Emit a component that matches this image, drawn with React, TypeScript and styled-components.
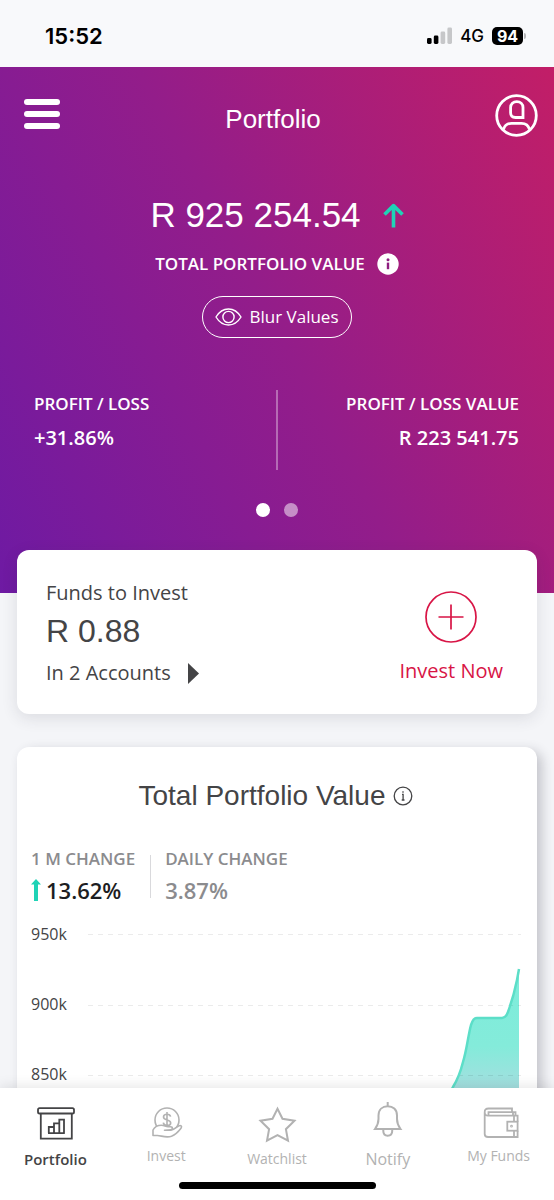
import React from "react";
import styled, { createGlobalStyle } from "styled-components";

const sans = `"Open Sans", "Noto Sans", sans-serif`;
const display = `"Liberation Sans", Arial, sans-serif`;
const system = `Inter, "Liberation Sans", sans-serif`;

const color = {
  page: "#f4f5f8",
  status: "#f8f9fb",
  ink: "#444446",
  muted: "#8b8b8e",
  idle: "#b2b2b2",
  accent: "#d81546",
  teal: "#1fd3b6",
};

const GlobalStyle = createGlobalStyle`
  *, *::before, *::after { box-sizing: border-box; }
  body { margin: 0; background: ${color.page}; font-family: ${sans}; color: ${color.ink}; }
  button { font: inherit; color: inherit; background: none; border: 0; padding: 0; cursor: pointer; }
  h1, h2, p, dl, dt, dd, ul { margin: 0; padding: 0; }
  svg { display: block; flex: none; }
`;

const Shell = styled.div`
  display: flex;
  flex-direction: column;
  height: 100vh;
  overflow: hidden;
`;

const StatusBar = styled.div`
  flex: none;
  display: flex;
  align-items: center;
  justify-content: space-between;
  height: 67px;
  padding: 4px 28px 0 45px;
  background: ${color.status};
  color: #000;
  font-family: ${system};
`;

const Clock = styled.time`
  font-size: 22px;
  font-weight: 600;
  line-height: 28px;
`;

const StatusIcons = styled.div`
  display: flex;
  align-items: center;
  gap: 8px;
`;

const Network = styled.span`
  font-size: 17px;
  font-weight: 500;
  line-height: 20px;
`;

const Battery = styled.span`
  display: flex;
  align-items: center;
  gap: 1px;
  &::after {
    content: "";
    width: 2px;
    height: 6px;
    border-radius: 0 2px 2px 0;
    background: #b5b6b8;
  }
`;

const Charge = styled.span`
  width: 31px;
  border-radius: 5px;
  background: #000;
  color: #fff;
  font-size: 16px;
  font-weight: 700;
  line-height: 18px;
  text-align: center;
`;

const Content = styled.main`
  flex: 1;
  min-height: 0;
  overflow-y: auto;
  scrollbar-width: none;
`;

const Hero = styled.section`
  display: flex;
  flex-direction: column;
  align-items: center;
  padding: 27px 0 76px;
  color: #fff;
  background: linear-gradient(62deg, #6e1aa3 0%, #931d8a 50%, #c21e67 100%);
`;

const TopBar = styled.header`
  align-self: stretch;
  display: grid;
  grid-template-columns: 1fr auto 1fr;
  align-items: center;
  padding: 0 16px 0 8px;
`;

const MenuButton = styled.button`
  justify-self: start;
  display: flex;
  flex-direction: column;
  gap: 6px;
  padding: 0 16px 4px;
`;

const MenuLine = styled.span`
  width: 36px;
  height: 6px;
  border-radius: 3px;
  background: #fff;
`;

const PageTitle = styled.h1`
  padding-top: 6px;
  font-family: ${display};
  font-size: 26px;
  font-weight: 400;
  line-height: 32px;
`;

const ProfileButton = styled.button`
  justify-self: end;
`;

const TotalRow = styled.div`
  display: flex;
  align-items: center;
  gap: 22px;
  margin-top: 56px;
`;

const TotalAmount = styled.p`
  font-family: ${display};
  font-size: 35px;
  line-height: 44px;
`;

const CaptionRow = styled.div`
  display: flex;
  align-items: center;
  gap: 12px;
  margin-top: 15px;
`;

const Caption = styled.p`
  font-size: 17px;
  font-weight: 600;
  line-height: 24px;
`;

const BlurButton = styled.button`
  display: flex;
  align-items: center;
  gap: 7px;
  height: 42px;
  margin-top: 20px;
  padding: 0 12px;
  border: 1px solid #fff;
  border-radius: 21px;
  font-size: 17px;
  line-height: 24px;
`;

const ProfitRow = styled.dl`
  align-self: stretch;
  display: flex;
  justify-content: space-between;
  height: 80px;
  margin-top: 52px;
  padding: 0 35px 0 34px;
`;

const Profit = styled.div<{ $end?: boolean }>`
  flex: 1;
  display: flex;
  flex-direction: column;
  gap: 8px;
  padding-top: 2px;
  text-align: ${(p) => (p.$end ? "right" : "left")};
  font-weight: 600;
`;

const ProfitLabel = styled.dt`
  font-size: 17px;
  line-height: 24px;
`;

const ProfitValue = styled.dd`
  font-size: 20px;
  line-height: 28px;
`;

const ProfitDivider = styled.div`
  width: 2px;
  background: rgba(255, 255, 255, 0.35);
`;

const Dots = styled.div`
  display: flex;
  gap: 14px;
  margin-top: 33px;
`;

const Dot = styled.button<{ $active?: boolean }>`
  width: 14px;
  height: 14px;
  border-radius: 50%;
  background: ${(p) => (p.$active ? "#fff" : "rgba(255, 255, 255, 0.5)")};
`;

const Card = styled.section`
  margin: 0 17px;
  border-radius: 12px;
  background: #fff;
`;

const FundsCard = styled(Card)`
  position: relative;
  display: flex;
  align-items: flex-end;
  justify-content: space-between;
  margin-top: -43px;
  padding: 29px 34px 27px 29px;
  box-shadow: 0 4px 16px rgba(40, 40, 60, 0.12);
`;

const FundsText = styled.div`
  display: flex;
  flex-direction: column;
  align-items: flex-start;
  font-size: 20px;
  line-height: 28px;
`;

const FundsAmount = styled.p`
  margin: 4px 0 8px;
  font-family: ${display};
  font-size: 32px;
  line-height: 40px;
`;

const AccountsButton = styled.button`
  display: flex;
  align-items: center;
  gap: 17px;
`;

const InvestButton = styled.button`
  display: flex;
  flex-direction: column;
  align-items: center;
  gap: 14px;
  padding-bottom: 2px;
  color: ${color.accent};
  font-size: 20px;
  line-height: 28px;
`;

const ChartCard = styled(Card)`
  margin-top: 33px;
  margin-bottom: 24px;
  padding: 31px 16px 16px 14px;
  box-shadow: 5px 4px 12px rgba(40, 40, 60, 0.24);
`;

const ChartHeading = styled.div`
  display: flex;
  align-items: center;
  justify-content: center;
  gap: 8px;
`;

const ChartTitle = styled.h2`
  font-family: ${display};
  font-size: 28px;
  font-weight: 400;
  line-height: 36px;
`;

const Changes = styled.dl`
  display: flex;
  align-items: flex-end;
  margin-top: 33px;
`;

const Change = styled.div<{ $strong?: boolean }>`
  color: ${(p) => (p.$strong ? "#1d1d22" : color.muted)};
  font-weight: 600;
`;

const ChangeLabel = styled.dt`
  color: ${color.muted};
  font-size: 17px;
  line-height: 24px;
`;

const ChangeValue = styled.dd`
  display: flex;
  align-items: center;
  gap: 5px;
  margin-top: 5px;
  font-size: 22px;
  line-height: 28px;
`;

const ChangeDivider = styled.div`
  width: 1px;
  height: 43px;
  margin: 0 14px 6px 15px;
  background: #d9d9dc;
`;

const Chart = styled.div`
  display: grid;
  grid-template-columns: 57px 1fr;
  margin-top: 20px;
`;

const AxisLabels = styled.ul`
  display: flex;
  flex-direction: column;
  gap: 50px;
  list-style: none;
  font-size: 16px;
  line-height: 20px;
`;

const Plot = styled.svg`
  width: 100%;
  height: 200px;
`;

const TabBar = styled.nav`
  position: relative;
  flex: none;
  padding: 14px 0 11px;
  background: #fff;
  box-shadow: 0 -2px 12px rgba(0, 0, 0, 0.1);
`;

const Tabs = styled.div`
  display: grid;
  grid-template-columns: repeat(5, 1fr);
`;

const Tab = styled.button<{ $active?: boolean; $size: number; $compact?: boolean }>`
  display: flex;
  flex-direction: column;
  align-items: center;
  justify-content: flex-start;
  gap: ${(p) => (p.$compact ? 4 : 7)}px;
  color: ${(p) => (p.$active ? color.ink : color.idle)};
  font-size: ${(p) => p.$size}px;
  font-weight: ${(p) => (p.$active ? 600 : 400)};
  line-height: 20px;
`;

const HomeIndicator = styled.div`
  width: 197px;
  height: 7px;
  margin: 13px auto 0;
  border-radius: 4px;
  background: #000;
`;

const Icon = ({ children, width = 1.8 }: { children: React.ReactNode; width?: number }) => (
  <svg width="40" height="40" viewBox="0 0 40 40" fill="none" stroke="currentColor" strokeWidth={width} overflow="visible" aria-hidden="true">
    {children}
  </svg>
);

const SignalIcon = () => (
  <svg width="25" height="17" viewBox="0 0 25 17" aria-hidden="true">
    <rect x="0" y="11" width="4.6" height="6" rx="1.4" fill="#000" />
    <rect x="6.8" y="8.5" width="4.6" height="8.5" rx="1.4" fill="#000" />
    <rect x="13.6" y="4.5" width="4.6" height="12.5" rx="1.4" fill="#c6c7c9" />
    <rect x="20.4" y="0.5" width="4.6" height="16.5" rx="1.4" fill="#c6c7c9" />
  </svg>
);

const ProfileIcon = () => (
  <svg width="43" height="43" viewBox="0 0 43 43" fill="none" stroke="#fff" strokeWidth="2.8" aria-hidden="true">
    <circle cx="21.5" cy="21.5" r="19.8" />
    <path d="M28 23.500H20.500C17.500 23.500 15.600 21.600 15.600 18.800V13.500C15.600 10 18.200 7.600 21.800 7.600S28 10 28 13.500Z" />
    <path d="M8.500 35.500C9.500 31.500 12.500 29.300 16.500 29.300H26.500C30.500 29.300 33.500 31.500 34.500 35.500" />
  </svg>
);

const TotalArrow = () => (
  <svg width="21" height="25" viewBox="0 0 21 25" fill="none" stroke={color.teal} strokeWidth="3.6" aria-hidden="true">
    <path d="M10.5 24.5V3M1.5 11.5 10.5 2.6l9 8.9" strokeLinejoin="round" />
  </svg>
);

const SolidInfo = () => (
  <svg width="22" height="22" viewBox="0 0 22 22" aria-hidden="true">
    <circle cx="11" cy="11" r="10.7" fill="#fff" />
    <circle cx="11" cy="6.8" r="1.5" fill="#8e1d80" />
    <path d="M11 9.6v6.600" fill="none" stroke="#8e1d80" strokeWidth="2.400" />
  </svg>
);

const OutlineInfo = () => (
  <svg width="20" height="20" viewBox="0 0 20 20" fill="none" stroke={color.ink} strokeWidth="1.3" aria-hidden="true">
    <circle cx="10" cy="10" r="8.8" />
    <path d="M9 8.400H10.100v5.400M8.700 14h2.800M10 5.200v1.500" />
  </svg>
);

const EyeIcon = () => (
  <svg width="27" height="18" viewBox="0 0 27 18" fill="none" stroke="#fff" strokeWidth="1.4" aria-hidden="true">
    <path d="M1 9C4 4 8.4 1 13.5 1S23 4 26 9c-3 5-7.4 8-12.5 8S4 14 1 9Z" />
    <circle cx="13.5" cy="9" r="5.6" />
  </svg>
);

const PlusCircle = () => (
  <svg width="52" height="52" viewBox="0 0 52 52" fill="none" stroke="currentColor" strokeWidth="1.7" aria-hidden="true">
    <circle cx="26" cy="26" r="25" />
    <path d="M26 13.5v25M13.5 26h25" />
  </svg>
);

const Caret = () => (
  <svg width="11" height="21" viewBox="0 0 11 21" fill="currentColor" aria-hidden="true">
    <path d="M0 0 11 10.5 0 21Z" />
  </svg>
);

const ChangeArrow = () => (
  <svg width="10" height="22" viewBox="0 0 10 22" fill={color.teal} aria-hidden="true">
    <path d="M5 0 10 5.5H7V22H3V5.5H0Z" />
  </svg>
);

const tabs = [
  {
    label: "Portfolio",
    active: true,
    size: 15,
    icon: (
      <Icon>
        <rect x="3" y="6.2" width="36" height="5.3" rx="1.6" />
        <path d="M5.8 11.5V36.6H36.8V11.5M13.8 31.2V25H19V31.2M19 25V21.4H24.3V31.2M24.3 21.4V17.6H29V31.2M13 31.2H29.8" />
      </Icon>
    ),
  },
  {
    label: "Invest",
    compact: true,
    size: 14,
    icon: (
      <Icon width={1.6}>
        <circle cx="21" cy="18" r="12" />
        <path d="M24.6 14.6C24.2 12.9 22.8 12.3 21 12.3c-2 0-3.5 1-3.5 2.700 0 3.800 7.200 2.300 7.200 5.900 0 1.700-1.600 2.600-3.600 2.600-2.100 0-3.600-.9-3.800-2.800M21 10v15" />
        <path
          fill="#fff"
          strokeLinejoin="round"
          d="M7 33.5V28C8.5 25 11.5 23.2 15.5 23.2C18.5 23.2 19.5 24.8 22 24.8H24.5C27 24.8 27 27.5 24.5 27.7L18.5 28.2H25C28 27.8 30 25.6 32.5 24C34.8 22.7 36.4 24.3 35 26.2C32.5 29.5 28.5 33 25.5 34.2C20 36.2 15 33.5 11.5 33.5Z"
        />
      </Icon>
    ),
  },
  {
    label: "Watchlist",
    size: 14,
    icon: (
      <Icon width={2}>
        <path d="M20.5 6.8 25.5 16.8 37.5 18.7 28.9 27.2 31 38.7 20.5 33.2 10 38.7 12.1 27.2 3.5 18.7 15.5 16.8Z" />
      </Icon>
    ),
  },
  {
    label: "Notify",
    size: 16,
    icon: (
      <Icon width={2}>
        <path d="M19.7 0V4M7 27C9.5 23.5 10.5 20.5 10.5 17V13.5C10.5 7.5 14.5 4.2 19.7 4.2S29 7.5 29 13.5V17C29 20.5 30 23.5 32.5 27ZM15.3 27V29C15.3 32 17 33.7 19.7 33.7S24.2 32 24.2 29V27" />
      </Icon>
    ),
  },
  {
    label: "My Funds",
    compact: true,
    size: 14,
    icon: (
      <Icon>
        <path d="M34 13.5V10.2M33 10.2V6.5H9.5C7 6.5 5.700 7.800 5.700 10.2V32C5.700 34 6.800 35 9 35H38.6V28.7M38.6 19.7V13.7H9C7 13.7 5.700 12.500 5.700 10.2M9.5 13.7V10.2H36.5V13.7M35 13.7V19.7M35 28.7V35" />
        <rect x="28.3" y="19.7" width="10.3" height="9" />
        <circle cx="32.5" cy="24.2" r="0.5" />
      </Icon>
    ),
  },
];

const axis = ["950k", "900k", "850k"];
const curve =
  "M345 200C352 185 359 174 365 163C370 155 373 146 375 138C379 125 380 112 383 101C385 95.5 386 94 389 94H414C417 94 418.5 92 420 88C424 77 427 66 429 56L431 45";

export default function App() {
  return (
    <Shell>
      <GlobalStyle />
      <StatusBar>
        <Clock>15:52</Clock>
        <StatusIcons>
          <SignalIcon />
          <Network>4G</Network>
          <Battery>
            <Charge>94</Charge>
          </Battery>
        </StatusIcons>
      </StatusBar>

      <Content>
        <Hero>
          <TopBar>
            <MenuButton aria-label="Menu">
              <MenuLine />
              <MenuLine />
              <MenuLine />
            </MenuButton>
            <PageTitle>Portfolio</PageTitle>
            <ProfileButton aria-label="Profile">
              <ProfileIcon />
            </ProfileButton>
          </TopBar>

          <TotalRow>
            <TotalAmount>R 925 254.54</TotalAmount>
            <TotalArrow />
          </TotalRow>
          <CaptionRow>
            <Caption>TOTAL PORTFOLIO VALUE</Caption>
            <button aria-label="About total portfolio value">
              <SolidInfo />
            </button>
          </CaptionRow>
          <BlurButton>
            <EyeIcon />
            Blur Values
          </BlurButton>

          <ProfitRow>
            <Profit>
              <ProfitLabel>PROFIT / LOSS</ProfitLabel>
              <ProfitValue>+31.86%</ProfitValue>
            </Profit>
            <ProfitDivider />
            <Profit $end>
              <ProfitLabel>PROFIT / LOSS VALUE</ProfitLabel>
              <ProfitValue>R 223 541.75</ProfitValue>
            </Profit>
          </ProfitRow>
          <Dots>
            <Dot $active aria-label="Slide 1" />
            <Dot aria-label="Slide 2" />
          </Dots>
        </Hero>

        <FundsCard>
          <FundsText>
            <p>Funds to Invest</p>
            <FundsAmount>R 0.88</FundsAmount>
            <AccountsButton>
              In 2 Accounts
              <Caret />
            </AccountsButton>
          </FundsText>
          <InvestButton>
            <PlusCircle />
            Invest Now
          </InvestButton>
        </FundsCard>

        <ChartCard>
          <ChartHeading>
            <ChartTitle>Total Portfolio Value</ChartTitle>
            <button aria-label="About this chart">
              <OutlineInfo />
            </button>
          </ChartHeading>
          <Changes>
            <Change $strong>
              <ChangeLabel>1 M CHANGE</ChangeLabel>
              <ChangeValue>
                <ChangeArrow />
                13.62%
              </ChangeValue>
            </Change>
            <ChangeDivider />
            <Change>
              <ChangeLabel>DAILY CHANGE</ChangeLabel>
              <ChangeValue>3.87%</ChangeValue>
            </Change>
          </Changes>
          <Chart>
            <AxisLabels>
              {axis.map((label) => (
                <li key={label}>{label}</li>
              ))}
            </AxisLabels>
            <Plot viewBox="0 0 433 200" preserveAspectRatio="none" role="img" aria-label="Portfolio value over one month">
              <defs>
                <linearGradient id="area" gradientUnits="userSpaceOnUse" x1="0" y1="45" x2="0" y2="200">
                  <stop offset="0" stopColor="#7ceddb" />
                  <stop offset="0.5" stopColor="#84ebda" />
                  <stop offset="0.8" stopColor="#a8dde0" />
                  <stop offset="1" stopColor="#acd9e2" />
                </linearGradient>
              </defs>
              <path d={`${curve}V200Z`} fill="url(#area)" />
              <path d="M0 10.5H433M0 81.5H433M0 151.5H433" stroke="#000" strokeOpacity="0.08" strokeDasharray="5 5" />
              <path d={curve} fill="none" stroke="#5cdec8" strokeWidth="2.5" />
            </Plot>
          </Chart>
        </ChartCard>
      </Content>

      <TabBar>
        <Tabs>
          {tabs.map((tab) => (
            <Tab key={tab.label} $active={tab.active} $size={tab.size} $compact={tab.compact}>
              {tab.icon}
              {tab.label}
            </Tab>
          ))}
        </Tabs>
        <HomeIndicator />
      </TabBar>
    </Shell>
  );
}
